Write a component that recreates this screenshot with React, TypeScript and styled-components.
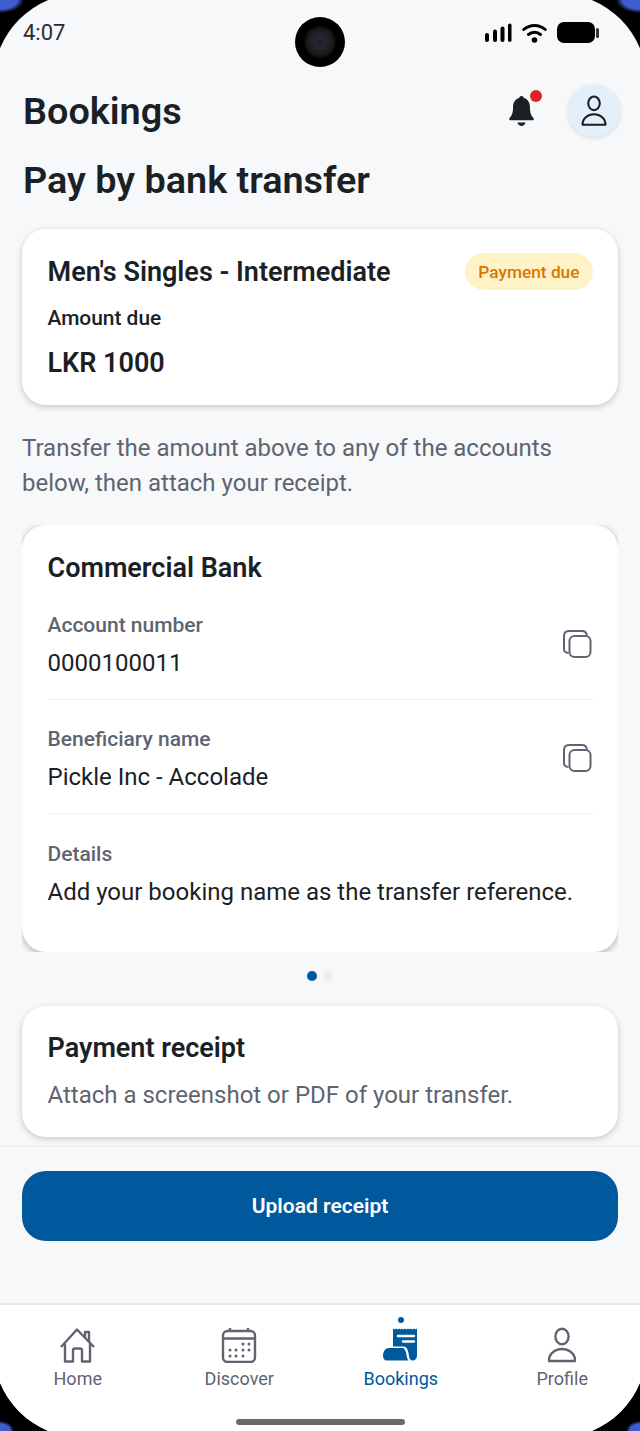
// App.tsx
// Bank transfer payment screen inside a phone frame.
import styled, { createGlobalStyle } from 'styled-components';

const GlobalStyle = createGlobalStyle`
  html, body {
    margin: 0;
    padding: 0;
    background: #000;
  }
  * {
    box-sizing: border-box;
  }
`;

const Frame = styled.div`
  width: 640px;
  height: 1431px;
  background:
    radial-gradient(ellipse 24px 13px at 0 0, #3f5fd0 70%, transparent 100%),
    radial-gradient(ellipse 24px 13px at 100% 0, #3f5fd0 70%, transparent 100%),
    radial-gradient(ellipse 14px 10px at 0 100%, #3f5fd0 70%, transparent 100%),
    radial-gradient(ellipse 14px 10px at 100% 100%, #3f5fd0 70%, transparent 100%),
    #000;
  overflow: hidden;
`;

/* the glass runs a little past the picture, so only the middle of its corner arc shows */
const Screen = styled.div`
  position: relative;
  width: 654px;
  height: 1445px;
  margin: -7px;
  padding: 7px 7px 0;
  background: #f6f8fa;
  border-radius: 90px;
  overflow: hidden;
  display: flex;
  flex-direction: column;
  font-family: Roboto, 'Noto Sans', sans-serif;
  color: #1b1f26;
`;

const StatusBar = styled.div`
  height: 64px;
  padding: 20px 41px 0 23px;
  display: flex;
  justify-content: space-between;
  align-items: flex-start;
`;

const Clock = styled.span`
  font-size: 22px;
  line-height: 26px;
  font-weight: 400;
  color: #2a2d33;
`;

const StatusIcons = styled.div`
  display: flex;
  align-items: center;
  gap: 10px;
  margin-top: 2px;
  height: 21px;
`;

const Camera = styled.div`
  position: absolute;
  left: 302px;
  top: 24px;
  width: 50px;
  height: 50px;
  border-radius: 50%;
  background: radial-gradient(circle at 50% 50%, #1c1c3a 0, #26262c 6px, #1a1a1c 13px, #000 17px);
`;

const Header = styled.header`
  height: 60px;
  margin-top: 17px;
  padding: 0 20px 0 23px;
  display: flex;
  align-items: center;
  justify-content: space-between;
`;

const PageTitle = styled.h1`
  margin: 0;
  font-size: 37.8px;
  line-height: 44px;
  font-weight: 600;
`;

const HeaderActions = styled.div`
  display: flex;
  align-items: center;
  gap: 32px;
`;

const BellButton = styled.div`
  position: relative;
  width: 30px;
  height: 36px;
  display: flex;
  align-items: center;
  justify-content: center;
`;

const BellDot = styled.span`
  position: absolute;
  top: -3px;
  right: -6px;
  width: 12px;
  height: 12px;
  border-radius: 50%;
  background: #dc2626;
`;

const Avatar = styled.div`
  width: 52px;
  height: 52px;
  border-radius: 50%;
  background: #e3f0fa;
  box-shadow: 0 1px 4px rgba(0, 0, 0, 0.14);
  display: flex;
  align-items: center;
  justify-content: center;
`;

const Content = styled.main`
  padding: 0 22px;
  display: flex;
  flex-direction: column;
`;

const SectionTitle = styled.h2`
  margin: 17px 0 0;
  font-size: 37.8px;
  line-height: 44px;
  font-weight: 600;
  padding-left: 1px;
`;

const Card = styled.section`
  background: #fff;
  border-radius: 24px;
  box-shadow: 0 2px 6px rgba(0, 0, 0, 0.2);
  padding: 0 25.5px;
`;

const SummaryCard = styled(Card)`
  margin-top: 27px;
  height: 176px;
  padding-top: 24px;
`;

const SummaryTop = styled.div`
  display: flex;
  align-items: center;
  justify-content: space-between;
  height: 37px;
`;

const CardTitle = styled.h3`
  margin: 0;
  font-size: 27px;
  line-height: 36px;
  font-weight: 600;
`;

const Badge = styled.span`
  height: 37px;
  padding: 0 13px;
  border-radius: 19px;
  background: #fef3c7;
  color: #d97706;
  font-size: 17.3px;
  font-weight: 500;
  display: flex;
  align-items: center;
`;

const AmountLabel = styled.div`
  margin-top: 14px;
  font-size: 20.9px;
  line-height: 28px;
  font-weight: 500;
`;

const AmountValue = styled.div`
  margin-top: 13px;
  font-size: 27px;
  line-height: 36px;
  font-weight: 600;
`;

const Intro = styled.p`
  margin: 26px 0 0;
  font-size: 24px;
  line-height: 35px;
  font-weight: 400;
  color: #5f6470;
`;

/* the pager clips the card's shadow at its rounded bottom edge */
const Pager = styled.div`
  margin-top: 24px;
  height: 427px;
  overflow: hidden;
`;

const BankCard = styled(Card)`
  height: 427px;
  padding-top: 25px;
  box-shadow: 0 2px 7px rgba(0, 0, 0, 0.3);
`;

const FieldRow = styled.div<{ $divided?: boolean }>`
  height: 114px;
  display: flex;
  align-items: center;
  justify-content: space-between;
  padding-top: 3px;
  border-bottom: ${({ $divided }) => ($divided ? '1px solid #eef0f2' : 'none')};
`;

const FieldLabel = styled.div`
  font-size: 21px;
  line-height: 28px;
  font-weight: 500;
  color: #5f6470;
`;

const FieldValue = styled.div`
  margin-top: 10px;
  font-size: 24px;
  line-height: 28px;
`;

const CopyIcon = styled.svg`
  width: 30px;
  height: 30px;
  margin-right: 0.5px;
  margin-top: 2px;
  flex: none;
`;

const Dots = styled.div`
  height: 54px;
  padding-bottom: 6px;
  display: flex;
  align-items: center;
  justify-content: center;
  gap: 6px;
`;

const Dot = styled.span<{ $active?: boolean }>`
  width: 10px;
  height: 10px;
  border-radius: 50%;
  background: ${({ $active }) => ($active ? '#00599c' : '#eceef0')};
`;

const ReceiptCard = styled(Card)`
  height: 131px;
  padding-top: 24px;
`;

const ReceiptHint = styled.p`
  margin: 12px 0 0;
  font-size: 24px;
  line-height: 35px;
  color: #5f6470;
`;

const Footer = styled.div`
  margin-top: 9px;
  border-top: 1px solid #e8eaed;
  padding: 24px 22px 0;
  height: 157px;
`;

const PrimaryButton = styled.button`
  width: 100%;
  height: 70px;
  border: none;
  border-radius: 24px;
  background: #00599c;
  color: #fff;
  font-family: inherit;
  font-size: 21px;
  font-weight: 600;
`;

const TabBar = styled.nav`
  flex: 1;
  background: #fff;
  border-top: 2px solid #e6e8ea;
  margin: 0 -7px;
  padding: 22px 4px 0;
  display: grid;
  grid-template-columns: repeat(4, 1fr);
  align-content: start;
`;

const Tab = styled.div<{ $active?: boolean }>`
  position: relative;
  display: flex;
  flex-direction: column;
  align-items: center;
  color: ${({ $active }) => ($active ? '#00599c' : '#5f6470')};
  font-size: 18px;
  line-height: 22px;
  font-weight: 400;

  svg {
    width: 40px;
    height: 36px;
    margin-bottom: 5px;
    display: block;
  }
`;

const TabMarker = styled.span`
  position: absolute;
  top: -10px;
  left: 50%;
  margin-left: -3px;
  width: 6px;
  height: 6px;
  border-radius: 50%;
  background: #00599c;
`;

const HomeIndicator = styled.div`
  position: absolute;
  left: 243px;
  bottom: 13px;
  width: 169px;
  height: 6px;
  border-radius: 3px;
  background: #6a6a6a;
`;

const fields = [
  { label: 'Account number', value: '0000100011', copy: true },
  { label: 'Beneficiary name', value: 'Pickle Inc - Accolade', copy: true },
  { label: 'Details', value: 'Add your booking name as the transfer reference.', copy: false },
];

function Copy() {
  return (
    <CopyIcon viewBox="0 0 30 30" fill="none" stroke="#5f6470" strokeWidth="2">
      <path d="M6.500 23C3.500 22.800 2 21 2 19V6c0-3 2-5 5-5h13c2.500 0 4.500 1.500 5 4.500" />
      <rect x="7.500" y="6" width="21" height="21" rx="5" />
    </CopyIcon>
  );
}

function PersonIcon({ color, width }: { color: string; width: number }) {
  return (
    <svg viewBox="0 0 32 36" width={width} height={width * 1.125} fill="none" stroke={color} strokeWidth="2.400">
      <ellipse cx="16" cy="9.500" rx="6.600" ry="7.800" />
      <path d="M3 34c-.5-7 6-12 13-12s13.500 5 13 12z" strokeLinejoin="round" />
    </svg>
  );
}

export default function App() {
  return (
    <Frame>
      <GlobalStyle />
      <Screen>
        <StatusBar>
          <Clock>4:07</Clock>
          <StatusIcons>
            <svg width="27" height="20" viewBox="0 0 27 20" fill="#000">
              <rect x="0" y="10" width="4" height="9" rx="2" />
              <rect x="8" y="6.500" width="4" height="12.500" rx="2" />
              <rect x="15.500" y="3.500" width="4" height="15.500" rx="2" />
              <rect x="23" y="0.500" width="3.500" height="18.500" rx="1.750" />
            </svg>
            <svg width="25" height="20" viewBox="0 0 25 20" fill="none" stroke="#000" strokeWidth="3" strokeLinecap="round">
              <path d="M1.800 6.500c6-5.500 15.400-5.500 21.400 0" />
              <path d="M6.500 11.500c3.500-3 8.500-3 12 0" />
              <circle cx="12.500" cy="17" r="1.300" fill="#000" />
            </svg>
            <svg width="42" height="21" viewBox="0 0 42 21" fill="#000">
              <rect x="0" y="0" width="38" height="21" rx="7" />
              <rect x="39" y="6" width="3" height="10" rx="1.500" fill="#333" />
            </svg>
          </StatusIcons>
        </StatusBar>
        <Camera />

        <Header>
          <PageTitle>Bookings</PageTitle>
          <HeaderActions>
            <BellButton>
              <svg width="27" height="32" viewBox="0 0 30 36" fill="#1b1f26">
                <path d="M15 1c1.500 0 2.500 1 2.500 2.400 5 1.400 7 5.500 7 10.100 0 6 1 9.500 4 12.500.8 1 .2 2.500-1.200 2.500H2.700c-1.400 0-2-1.500-1.200-2.500 3-3 4-6.500 4-12.500 0-4.600 2-8.700 7-10.100C12.500 2 13.500 1 15 1z" />
                <path d="M10.500 31h9c-.6 2.400-2.400 4-4.500 4s-3.900-1.600-4.500-4z" />
              </svg>
              <BellDot />
            </BellButton>
            <Avatar>
              <PersonIcon color="#1b1f26" width={28} />
            </Avatar>
          </HeaderActions>
        </Header>

        <Content>
          <SectionTitle>Pay by bank transfer</SectionTitle>

          <SummaryCard>
            <SummaryTop>
              <CardTitle>Men's Singles - Intermediate</CardTitle>
              <Badge>Payment due</Badge>
            </SummaryTop>
            <AmountLabel>Amount due</AmountLabel>
            <AmountValue>LKR 1000</AmountValue>
          </SummaryCard>

          <Intro>
            Transfer the amount above to any of the accounts
            <br />
            below, then attach your receipt.
          </Intro>

          <Pager>
            <BankCard>
              <CardTitle>Commercial Bank</CardTitle>
              {fields.map((field, index) => (
                <FieldRow key={field.label} $divided={index < 2}>
                  <div>
                    <FieldLabel>{field.label}</FieldLabel>
                    <FieldValue>{field.value}</FieldValue>
                  </div>
                  {field.copy && <Copy />}
                </FieldRow>
              ))}
            </BankCard>
          </Pager>

          <Dots>
            <Dot $active />
            <Dot />
          </Dots>

          <ReceiptCard>
            <CardTitle>Payment receipt</CardTitle>
            <ReceiptHint>Attach a screenshot or PDF of your transfer.</ReceiptHint>
          </ReceiptCard>
        </Content>

        <Footer>
          <PrimaryButton>Upload receipt</PrimaryButton>
        </Footer>

        <TabBar>
          <Tab>
            <svg viewBox="0 0 40 36" fill="none" stroke="currentColor" strokeWidth="2.400" strokeLinejoin="round">
              <path d="M3 20 19 2.500 36 20" />
              <path d="M27 11V5h4v10.500" />
              <path d="M7 16.500V34.500h8V23.500q0-2 2-2h5q2 0 2 2V34.500h8V16.500" />
            </svg>
            Home
          </Tab>
          <Tab>
            <svg viewBox="0 0 40 36" fill="none" stroke="currentColor" strokeWidth="2.400">
              <rect x="4" y="4" width="32" height="31" rx="4.500" />
              <path d="M4 11.500h32M11 1v3M29 1v3" />
              <g fill="currentColor" stroke="none">
                <circle cx="24" cy="17" r="1.500" />
                <circle cx="30" cy="17" r="1.500" />
                <circle cx="11" cy="23" r="1.500" />
                <circle cx="17" cy="23" r="1.500" />
                <circle cx="24" cy="23" r="1.500" />
                <circle cx="30" cy="23" r="1.500" />
                <circle cx="11" cy="29" r="1.500" />
                <circle cx="17" cy="29" r="1.500" />
                <circle cx="24" cy="29" r="1.500" />
              </g>
            </svg>
            Discover
          </Tab>
          <Tab $active>
            <TabMarker />
            <svg viewBox="0 0 40 36" fill="currentColor">
              <path d="M12 1.500l1.500 1 1.500-1 1.500 1 1.500-1 1.500 1 1.500-1 1.500 1 1.500-1 1.500 1 1.500-1 1.500 1 1.500-1 1.500 1 1.500-1 1.500 1 1.500-1V29c0 2.500-2 4.500-4.500 4.500-2 0-3.200-1.700-3.500-4.500-.6-5-1.500-9.500-6-9.500H12z" />
              <path d="M2 29c0-5 2.500-8 6-8h14.500c1.500 1.500 2.500 4 3 7 .3 2.500 1 4.200 2 5.500H6c-2.500 0-4-1.800-4-4.500z" />
              <g stroke="#fff" strokeWidth="2.400" strokeLinecap="round">
                <path d="M17 9h16M22 14.500h11" />
              </g>
            </svg>
            Bookings
          </Tab>
          <Tab>
            <PersonIcon color="currentColor" width={32} />
            Profile
          </Tab>
        </TabBar>
        <HomeIndicator />
      </Screen>
    </Frame>
  );
}
